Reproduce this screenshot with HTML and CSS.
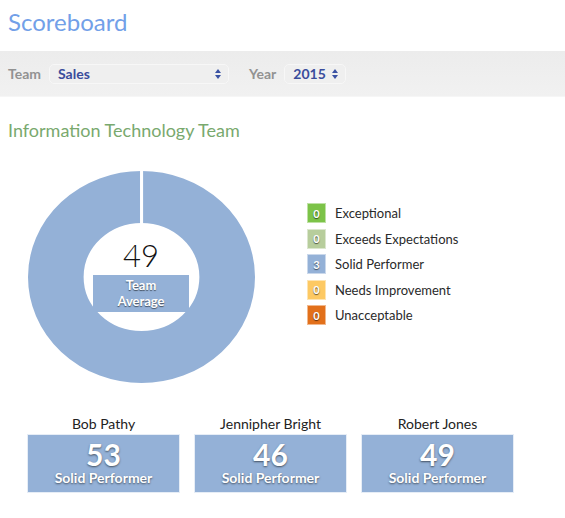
FILE: index.html
```html
<!DOCTYPE html>
<html>
<head>
<meta charset="utf-8">
<link rel="stylesheet" href="styles.css">
</head>
<body>
<h1 class="title">Scoreboard</h1>
<div class="filters">
  <span class="label">Team</span>
  <div class="select select-team">
    <span class="value">Sales</span>
    <svg class="arrows" width="6" height="10" viewBox="0 0 6 10"><path d="M3 0 L6 4 L0 4 Z M0 6 L6 6 L3 10 Z" fill="#3a52a3"/></svg>
  </div>
  <span class="label label-year">Year</span>
  <div class="select select-year">
    <span class="value">2015</span>
    <svg class="arrows" width="6" height="10" viewBox="0 0 6 10"><path d="M3 0 L6 4 L0 4 Z M0 6 L6 6 L3 10 Z" fill="#3a52a3"/></svg>
  </div>
</div>
<h2 class="team-title">Information Technology Team</h2>
<div class="overview">
  <div class="donut">
    <svg class="ring" width="227" height="212" viewBox="0 0 200 200" preserveAspectRatio="none">
      <circle cx="100" cy="100" r="75.5" fill="none" stroke="#94b1d7" stroke-width="49"/>
      <rect x="98.7" y="0" width="2.7" height="52" fill="#fff"/>
    </svg>
    <div class="center">
      <div class="avg">49</div>
      <div class="avg-label"><div>Team</div><div>Average</div></div>
    </div>
  </div>
  <ul class="legend">
    <li><span class="sq sq-exc">0</span>Exceptional</li>
    <li><span class="sq sq-exp">0</span>Exceeds Expectations</li>
    <li><span class="sq sq-sol">3</span>Solid Performer</li>
    <li><span class="sq sq-imp">0</span>Needs Improvement</li>
    <li><span class="sq sq-una">0</span>Unacceptable</li>
  </ul>
</div>
<div class="members">
  <div class="member">
    <div class="name">Bob Pathy</div>
    <div class="card"><div class="score">53</div><div class="rating">Solid Performer</div></div>
  </div>
  <div class="member">
    <div class="name">Jennipher Bright</div>
    <div class="card"><div class="score">46</div><div class="rating">Solid Performer</div></div>
  </div>
  <div class="member">
    <div class="name">Robert Jones</div>
    <div class="card"><div class="score">49</div><div class="rating">Solid Performer</div></div>
  </div>
</div>
</body>
</html>
```
FILE: styles.css
```css
* { box-sizing: border-box; }
html, body { margin: 0; padding: 0; background: #fff; }
body { font-family: Lato, "Open Sans", "Liberation Sans", sans-serif; color: #222; width: 565px; }

.title {
  margin: 0;
  padding: 8px 0 0 8px;
  font-size: 24px;
  line-height: 28px;
  font-weight: 400;
  color: #72a0e8;
}

.filters {
  margin-top: 15px;
  height: 46px;
  background: linear-gradient(#ececec, #f1f1f1);
  border-bottom: 1px solid #f6f6f6;
  display: flex;
  align-items: center;
  padding-left: 8px;
}
.label {
  font-size: 14px;
  font-weight: 700;
  color: #929292;
}
.label-year { margin-left: 20px; }
.select {
  height: 20px;
  margin-left: 8px;
  display: flex;
  align-items: center;
  justify-content: space-between;
  background: #efefef;
  border: 1px solid #f7f7f7;
  border-radius: 5px;
  padding: 0 7px 0 8px;
}
.select-team { width: 180px; }
.select-year { width: 62px; }
.value {
  font-size: 14px;
  font-weight: 700;
  color: #3a4c9c;
}
.arrows { display: block; }

.team-title {
  margin: 22px 0 0 8px;
  font-size: 18px;
  line-height: 22px;
  font-weight: 400;
  color: #79a96e;
}

.overview {
  display: flex;
  margin-top: 30px;
  padding-left: 28px;
}
.donut {
  position: relative;
  width: 227px;
  height: 212px;
}
.ring { display: block; }
.center {
  position: absolute;
  left: 65px;
  top: 69px;
  width: 96px;
  display: flex;
  flex-direction: column;
  align-items: center;
}
.avg {
  font-size: 31px;
  line-height: 31px;
  font-weight: 300;
  color: #111;
}
.avg-label {
  margin-top: 4px;
  width: 96px;
  height: 37px;
  background: #94b1d7;
  color: #fff;
  font-size: 13px;
  font-weight: 700;
  line-height: 16px;
  text-align: center;
  padding-top: 2px;
  text-shadow: 0 1px 1px rgba(0,0,0,0.55);
}

.legend {
  list-style: none;
  margin: 32px 0 0 52px;
  padding: 0;
}
.legend li {
  display: flex;
  align-items: center;
  height: 20px;
  margin-bottom: 5.5px;
  font-size: 13px;
  color: #2a2a2a;
}
.sq {
  width: 19px;
  height: 20px;
  margin-right: 9px;
  display: flex;
  align-items: center;
  justify-content: center;
  color: #fff;
  font-size: 11px;
  font-weight: 700;
  border: 1px solid rgba(255,255,255,0.5);
  text-shadow: 0 1px 1px rgba(0,0,0,0.6);
}
.sq-exc { background: #7cc348; }
.sq-exp { background: #b7cd9c; }
.sq-sol { background: #94b1d7; }
.sq-imp { background: #fdc963; }
.sq-una { background: #e2701b; }

.members {
  display: flex;
  gap: 14px;
  margin-top: 32px;
  padding-left: 27px;
}
.member { width: 153px; }
.name {
  text-align: center;
  font-size: 14px;
  line-height: 17px;
  color: #222;
  margin-bottom: 2px;
}
.card {
  height: 59px;
  background: #94b1d7;
  border: 1px solid #e6edf6;
  color: #fff;
  text-align: center;
  padding-top: 5px;
  text-shadow: 0 1px 2px rgba(0,0,0,0.55);
}
.score {
  font-size: 30px;
  line-height: 29px;
  font-weight: 700;
}
.rating {
  font-size: 14px;
  line-height: 17px;
  font-weight: 700;
}
```
